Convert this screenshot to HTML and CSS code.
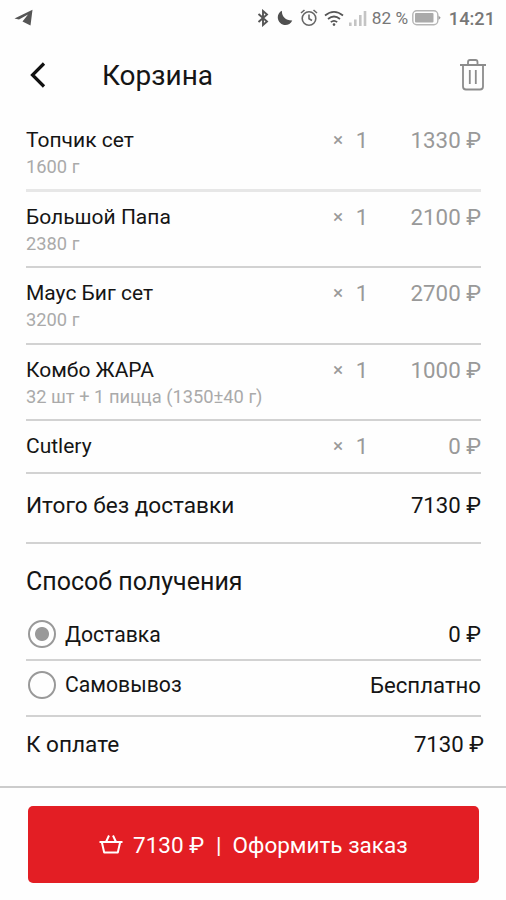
FILE: index.html
```html
<!DOCTYPE html>
<html lang="ru">
<head>
    <meta charset="UTF-8">
    <meta name="viewport" content="width=device-width, initial-scale=1.0">
    <title>Корзина</title>
    <link rel="stylesheet" href="styles.css">
</head>
<body>

    <div class="status-bar">
        <svg class="telegram" width="20" height="18" viewBox="0 0 20 18">
            <path d="M0.5 9.5 L18.5 0.8 L16.5 16.5 L8.5 12.5 L14 5.5 L5 10.5 Z" fill="#555"/>
        </svg>
        <div class="status-icons">
            <svg width="12" height="18" viewBox="0 0 12 18" fill="none" stroke="#555" stroke-width="1.9">
                <path d="M1.5 5 L10 12.5 L6 16 V2 L10 5.5 L1.5 13"/>
            </svg>
            <svg class="moon" width="16" height="16" viewBox="0 0 16 16">
                <path d="M5 0.8 C4.5 6 8 10.5 15.3 10.4 C13 15.5 7 16.5 3.3 13 C-0.8 9 0.3 2.8 5 0.8 Z" fill="#505050"/>
            </svg>
            <svg class="alarm" width="18" height="18" viewBox="0 0 18 18" fill="none" stroke="#666" stroke-width="1.6">
                <circle cx="9" cy="9.5" r="6.8"/>
                <path d="M9 5.5 V9.7 L12 11.5 M1 4 L4.5 1 M17 4 L13.5 1"/>
            </svg>
            <svg class="wifi" width="20" height="17" viewBox="0 0 20 17" fill="none" stroke="#555" stroke-width="1.7">
                <path d="M1 5.5 Q10 -1.8 19 5.5 M4 9 Q10 4 16 9 M6.8 12.2 Q10 9.5 13.2 12.2"/>
                <circle cx="10" cy="14.6" r="1.3" fill="#555" stroke="none"/>
            </svg>
            <svg class="signal" width="18" height="16" viewBox="0 0 18 16" fill="#c4c4c4">
                <path d="M0 12.5h2.6V16H0z M5 9.5h2.6V16H5z M10 5h2.6v11H10z M14.7 1h2.6v15h-2.6z"/>
            </svg>
            <span class="percent">82 %</span>
            <svg class="battery" width="29" height="16" viewBox="0 0 29 16">
                <rect x="0.8" y="0.8" width="25" height="14" rx="4" fill="none" stroke="#b5b5b5" stroke-width="1.4"/>
                <rect x="3" y="3" width="18.5" height="9.6" rx="1" fill="#aaa"/>
                <path d="M26.5 5.5 L28.7 7.8 L26.5 10 Z" fill="#999"/>
            </svg>
            <span class="time">14:21</span>
        </div>
    </div>

    <div class="header">
        <svg class="back" width="18" height="28" viewBox="0 0 18 28" fill="none" stroke="#111" stroke-width="3.2">
            <path d="M16 2.5 L4.5 14 L16 25.5"/>
        </svg>
        <h1>Корзина</h1>
        <svg class="trash" width="28" height="32" viewBox="0 0 28 32" fill="none" stroke="#8c8c8c" stroke-width="1.8">
            <path d="M1 6 H27 M9 5.5 V3 Q9 1 11 1 H16.5 Q18.5 1 18.5 3 V5.5 M4 6 V27.5 Q4 30.5 7 30.5 H21 Q24 30.5 24 27.5 V6"/>
            <path d="M10.8 11 V25 M16.8 11 V25"/>
        </svg>
    </div>

    <div class="cart">
        <div class="item first">
            <div class="name">Топчик сет<small>1600 г</small></div>
            <div class="count"><span>×</span>1</div>
            <div class="price">1330 ₽</div>
        </div>
        <div class="item">
            <div class="name">Большой Папа<small>2380 г</small></div>
            <div class="count"><span>×</span>1</div>
            <div class="price">2100 ₽</div>
        </div>
        <div class="item tall">
            <div class="name">Маус Биг сет<small>3200 г</small></div>
            <div class="count"><span>×</span>1</div>
            <div class="price">2700 ₽</div>
        </div>
        <div class="item">
            <div class="name">Комбо ЖАРА<small>32 шт + 1 пицца (1350±40 г)</small></div>
            <div class="count"><span>×</span>1</div>
            <div class="price">1000 ₽</div>
        </div>
        <div class="item cutlery">
            <div class="name">Cutlery</div>
            <div class="count"><span>×</span>1</div>
            <div class="price">0 ₽</div>
        </div>

        <div class="row subtotal">
            <div class="label">Итого без доставки</div>
            <div class="sum">7130 ₽</div>
        </div>

        <h2>Способ получения</h2>

        <div class="row delivery">
            <div class="radio checked"></div>
            <div class="label">Доставка</div>
            <div class="sum">0 ₽</div>
        </div>
        <div class="row pickup">
            <div class="radio"></div>
            <div class="label">Самовывоз</div>
            <div class="sum">Бесплатно</div>
        </div>
        <div class="row total">
            <div class="label">К оплате</div>
            <div class="sum">7130 ₽</div>
        </div>
    </div>

    <div class="footer">
        <button class="order">
            <svg width="24" height="20" viewBox="0 0 24 20" fill="none" stroke="#fff" stroke-width="2" stroke-linejoin="round">
                <path d="M0.5 7 H23.5 M2.8 7 L5.2 17.5 H18.8 L21.2 7 M7 7 L10 0.5 M17 7 L14 0.5"/>
            </svg>
            <span class="order-sum">7130 ₽</span>
            <span class="divider">|</span>
            <span class="order-text">Оформить заказ</span>
        </button>
    </div>

</body>
</html>
```
FILE: styles.css
```css
* {
    box-sizing: border-box;
}

body {
    font-family: Roboto, "Noto Sans", sans-serif;
    background-color: #fefefe;
    color: #151515;
    margin: 0;
    height: 900px;
    overflow: hidden;
    display: flex;
    flex-direction: column;
}

svg {
    display: block;
    flex: none;
}

.status-bar {
    height: 36px;
    padding: 0 11px 0 14px;
    display: flex;
    align-items: center;
    justify-content: space-between;
}

.status-icons {
    display: flex;
    align-items: center;
    white-space: nowrap;
}

.moon {
    margin-left: 8px;
}

.alarm {
    margin-left: 7px;
}

.wifi {
    margin-left: 6px;
}

.signal {
    margin-left: 5px;
}

.percent {
    font-size: 17.3px;
    color: #777;
    margin-left: 5px;
    width: 36px;
}

.battery {
    margin-left: 4px;
}

.time {
    font-size: 18.2px;
    font-weight: 500;
    color: #777;
    margin-left: 8px;
}

.header {
    height: 79px;
    padding: 0 19px 2px 28px;
    display: flex;
    align-items: center;
}

.header h1 {
    font-size: 28px;
    font-weight: 400;
    margin: 0 auto 0 56px;
    padding-top: 1px;
}

.cart {
    padding: 0 25px 0 26px;
    height: 671px;
}

.item {
    height: 76px;
    padding-top: 12px;
    border-bottom: 2px solid #d2d2d2;
    display: flex;
    line-height: 26px;
}

.item.first {
    height: 77px;
    border-bottom: 3px solid #e7e7e7;
}

.item.tall {
    height: 77px;
}

.item.cutlery {
    height: 53px;
}

.name {
    flex: 1;
    font-size: 21px;
}

.name small {
    display: block;
    font-size: 18.3px;
    color: #aaa;
    margin-top: 1px;
}

.count {
    font-size: 22px;
    line-height: 27px;
    color: #999;
    width: 35px;
    display: flex;
    justify-content: space-between;
}

.count span {
    font-size: 19px;
    line-height: 25px;
}

.price {
    font-size: 22.3px;
    color: #999;
    width: 113px;
    text-align: right;
}

.row {
    display: flex;
    align-items: center;
    border-bottom: 2px solid #d2d2d2;
    font-size: 22.2px;
}

.label {
    flex: 1;
}

.subtotal {
    height: 70px;
    padding-bottom: 6px;
}

.subtotal .label,
.total .label {
    font-size: 22.6px;
}

.cart h2 {
    font-size: 25px;
    font-weight: 400;
    line-height: 30px;
    margin: 0;
    padding: 23px 0 12px;
}

.radio {
    width: 28px;
    height: 28px;
    margin: 0 9px 0 2px;
    border: 2px solid #999;
    border-radius: 50%;
}

.radio.checked {
    background: radial-gradient(circle, #999 6.5px, transparent 7.5px);
}

.delivery {
    height: 52px;
}

.pickup {
    height: 56px;
    padding-bottom: 7px;
}

.delivery .label,
.pickup .label {
    font-size: 21.2px;
}

.total {
    height: 54px;
    border: none;
    margin-right: -3px;
}

.footer {
    flex: 1;
    border-top: 2px solid #ccc;
    padding: 18px 27px 0 28px;
}

.order {
    width: 100%;
    height: 77px;
    border: none;
    border-radius: 5px;
    background-color: #e31e24;
    color: #fff;
    font-family: inherit;
    font-size: 22.5px;
    display: flex;
    align-items: center;
    padding: 1px 0 0 71px;
}

.order-sum {
    margin-left: 10px;
}

.divider {
    margin-left: 12px;
}

.order-text {
    margin-left: 11px;
}
```
